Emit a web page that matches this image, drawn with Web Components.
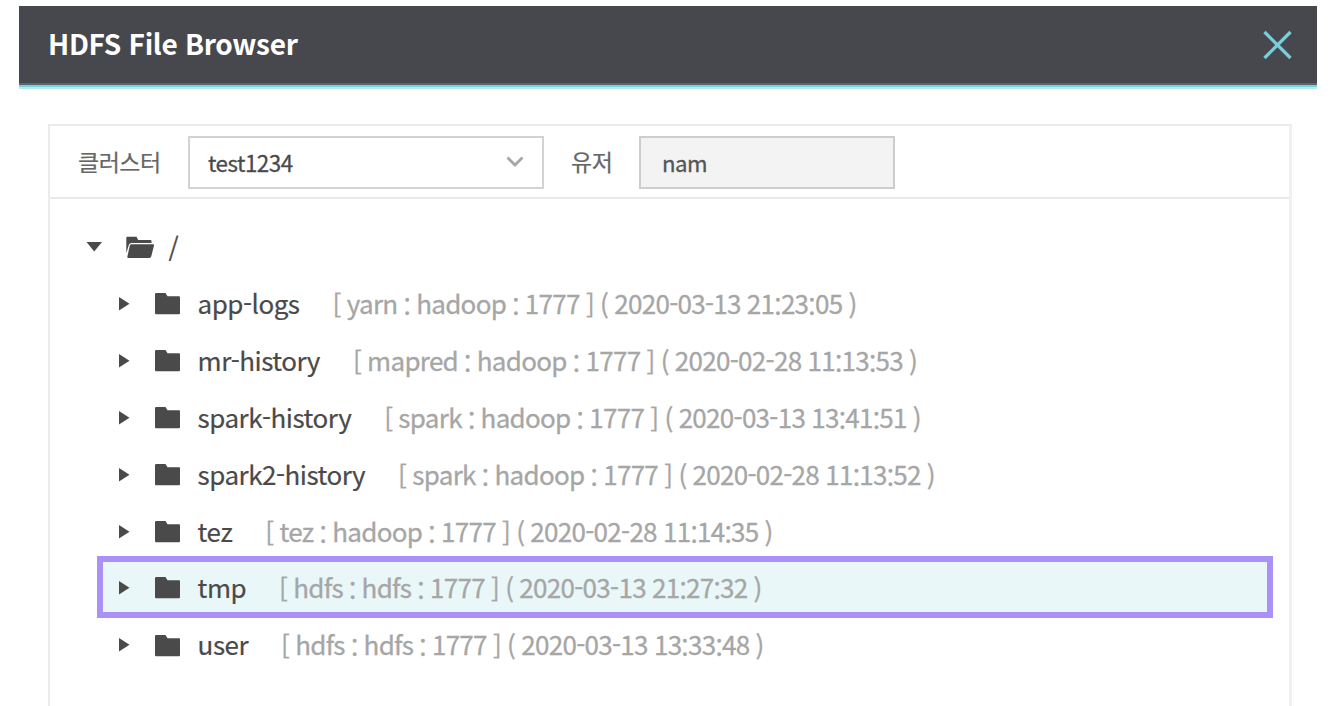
<!DOCTYPE html>
<html lang="ko">
<head>
<meta charset="utf-8">
<title>HDFS File Browser</title>
<style>
body{margin:0;background:#fff;overflow:hidden;font-family:"Noto Sans CJK KR","Noto Sans",sans-serif;color:#4a4a4a}
</style>
</head>
<body>
<file-browser></file-browser>
<script>
const define=(name,render)=>customElements.define(name,class extends HTMLElement{
  connectedCallback(){
    if(this.shadowRoot)return;
    const t=document.createElement('template');
    t.innerHTML=typeof render==='function'?render(this):render;
    this.attachShadow({mode:'open'}).append(t.content.cloneNode(true));
  }
});

define('dialog-header',`<style>
:host{display:flex;align-items:center;justify-content:space-between;box-sizing:border-box;height:83px;padding:0 24px 4px 29px;background:linear-gradient(#47484d 0 77px,#58686f 77px 79px,#75d4dc 79px 81px,#b9eaee 81px 83px);color:#fff;font-weight:700;font-size:28px;letter-spacing:-.3px;line-height:40px}
svg{display:block;margin-bottom:1px}
span{padding-bottom:5px}
</style><span><slot></slot></span>
<svg width="31" height="32" viewBox="0 0 31 32" fill="none" stroke="#78cfdb" stroke-width="3.3"><path d="M2.5 3L28.5 29M28.5 3L2.5 29"/></svg>`);

define('select-box',`<style>
:host{display:flex;align-items:center;justify-content:space-between;box-sizing:border-box;width:356px;height:53px;padding:0 18px 0 18px;border:2px solid #d3d3d3;background:#fff;line-height:30px;font-size:22.4px;color:#4a4a4a;-webkit-text-stroke:.3px #4a4a4a}
svg{display:block;margin-bottom:1px}
</style><slot></slot>
<svg width="18" height="12" viewBox="0 0 18 12" fill="none" stroke="#a6a6a6" stroke-width="2.8"><path d="M1.5 1.5L9 9L16.5 1.5"/></svg>`);

define('readonly-field',`<style>
:host{display:flex;align-items:center;box-sizing:border-box;width:256px;height:53px;padding:0 21px;border:2px solid #cdcdcd;background:#f3f3f3;line-height:30px;font-size:22.2px;color:#555;-webkit-text-stroke:.3px #555}
</style><slot></slot>`);

define('tool-bar',`<style>
:host{display:flex;align-items:center;box-sizing:border-box;height:73px;padding:1px 0 0 28px;border-bottom:2px solid #e9e9e9;font-size:23px;letter-spacing:-.5px;color:#666}
.c{width:110px}.u{width:68px;margin-left:27px}
.c,.u{line-height:30px;padding-bottom:2px;-webkit-text-stroke:.2px #666}
</style>
<span class="c">클러스터</span><select-box>test1234</select-box>
<span class="u">유저</span><readonly-field>nam</readonly-field>`);

define('folder-icon',el=>`<style>:host{display:block}svg{display:block}</style>
<svg width="30" height="24" viewBox="0 0 30 24" fill="#4a4a4a">${el.hasAttribute('open')
  ?'<path d="M1.3 17V1.8Q1.3.8 2.3.8H11.5L13.2 4H25.5Q26.5 4 26.5 5V7H6.3Q4.6 7 3.8 9L2 15Z"/><path d="M6.6 8.2H28Q29.4 8.2 29 9.6L26.2 20.6Q25.8 22 24.4 22H3.3Q2 22 2.4 20.6L4.8 9.6Q5.2 8.2 6.6 8.2Z"/>'
  :'<path d="M1.8 1H11.5L13.5 4.2H25Q26 4.2 26 5.2V21Q26 22.2 25 22.2H2Q1 22.2 1 21V1.8Z"/>'}</svg>`);

define('tree-row',el=>{
  const open=el.hasAttribute('open');
  const meta=(el.getAttribute('meta')||'').replace(/:/g,'<i>:</i>').replace(/[\[\]()]/g,'<b>$&</b>');
  return `<style>
:host{display:flow-root;height:56.85px;box-sizing:border-box}
div{display:flex;align-items:center;height:100%;box-sizing:border-box;padding-left:21px;font-size:26px;line-height:38px;letter-spacing:-.5px}
:host([selected]) div{height:62px;margin:-3.4px 0 0;border:6px solid #a991f7;background:#e9f7f8;padding-left:15px}
.a{flex:none;width:36px;height:16px;margin-top:1px}
folder-icon{width:43.6px;flex:none;margin-top:1.6px}
.n{-webkit-text-stroke:.2px #4a4a4a}
.m{margin-left:33px;color:#a6a6a6;letter-spacing:-.7px;word-spacing:-.5px;-webkit-text-stroke:.3px #a6a6a6}
.n,.m{padding-bottom:.6px;white-space:pre}
i,b{font-style:normal;font-weight:inherit;line-height:0;vertical-align:-3px}
b{vertical-align:-1px}
:host([open]) div{padding-left:0;margin-left:-11px}
:host([open]) .a{width:39px}
</style><div><svg class="a" viewBox="0 0 ${open?39:36} 16" fill="#4a4a4a"><path d="${open?'M.5 3H16L8.2 12.5Z':'M1 1L11.5 7.8L1 14.5Z'}"/></svg><folder-icon${open?' open':''}></folder-icon><span class="n"><slot></slot></span>${open?'':`<span class="m">${meta}</span>`}</div>`;
});

define('file-tree',`<style>:host{display:block;padding:19.4px 16px 0 47px}</style>
<tree-row open>/</tree-row>
<tree-row meta="[ yarn : hadoop : 1777 ] ( 2020-03-13 21:23:05 )">app-logs</tree-row>
<tree-row meta="[ mapred : hadoop : 1777 ] ( 2020-02-28 11:13:53 )">mr-history</tree-row>
<tree-row meta="[ spark : hadoop : 1777 ] ( 2020-03-13 13:41:51 )">spark-history</tree-row>
<tree-row meta="[ spark : hadoop : 1777 ] ( 2020-02-28 11:13:52 )">spark2-history</tree-row>
<tree-row meta="[ tez : hadoop : 1777 ] ( 2020-02-28 11:14:35 )">tez</tree-row>
<tree-row selected meta="[ hdfs : hdfs : 1777 ] ( 2020-03-13 21:27:32 )">tmp</tree-row>
<tree-row meta="[ hdfs : hdfs : 1777 ] ( 2020-03-13 13:33:48 )">user</tree-row>`);

define('file-browser',`<style>
:host{display:block;box-sizing:border-box;height:706px;padding:6px 13px 0 19px;overflow:hidden}
main{box-sizing:border-box;height:600px;margin:35px 25px 0 29px;border:2px solid #ebebeb;border-right:3px solid #f0f0f0}
</style><dialog-header>HDFS File Browser</dialog-header>
<main><tool-bar></tool-bar><file-tree></file-tree></main>`);
</script>
</body>
</html>
